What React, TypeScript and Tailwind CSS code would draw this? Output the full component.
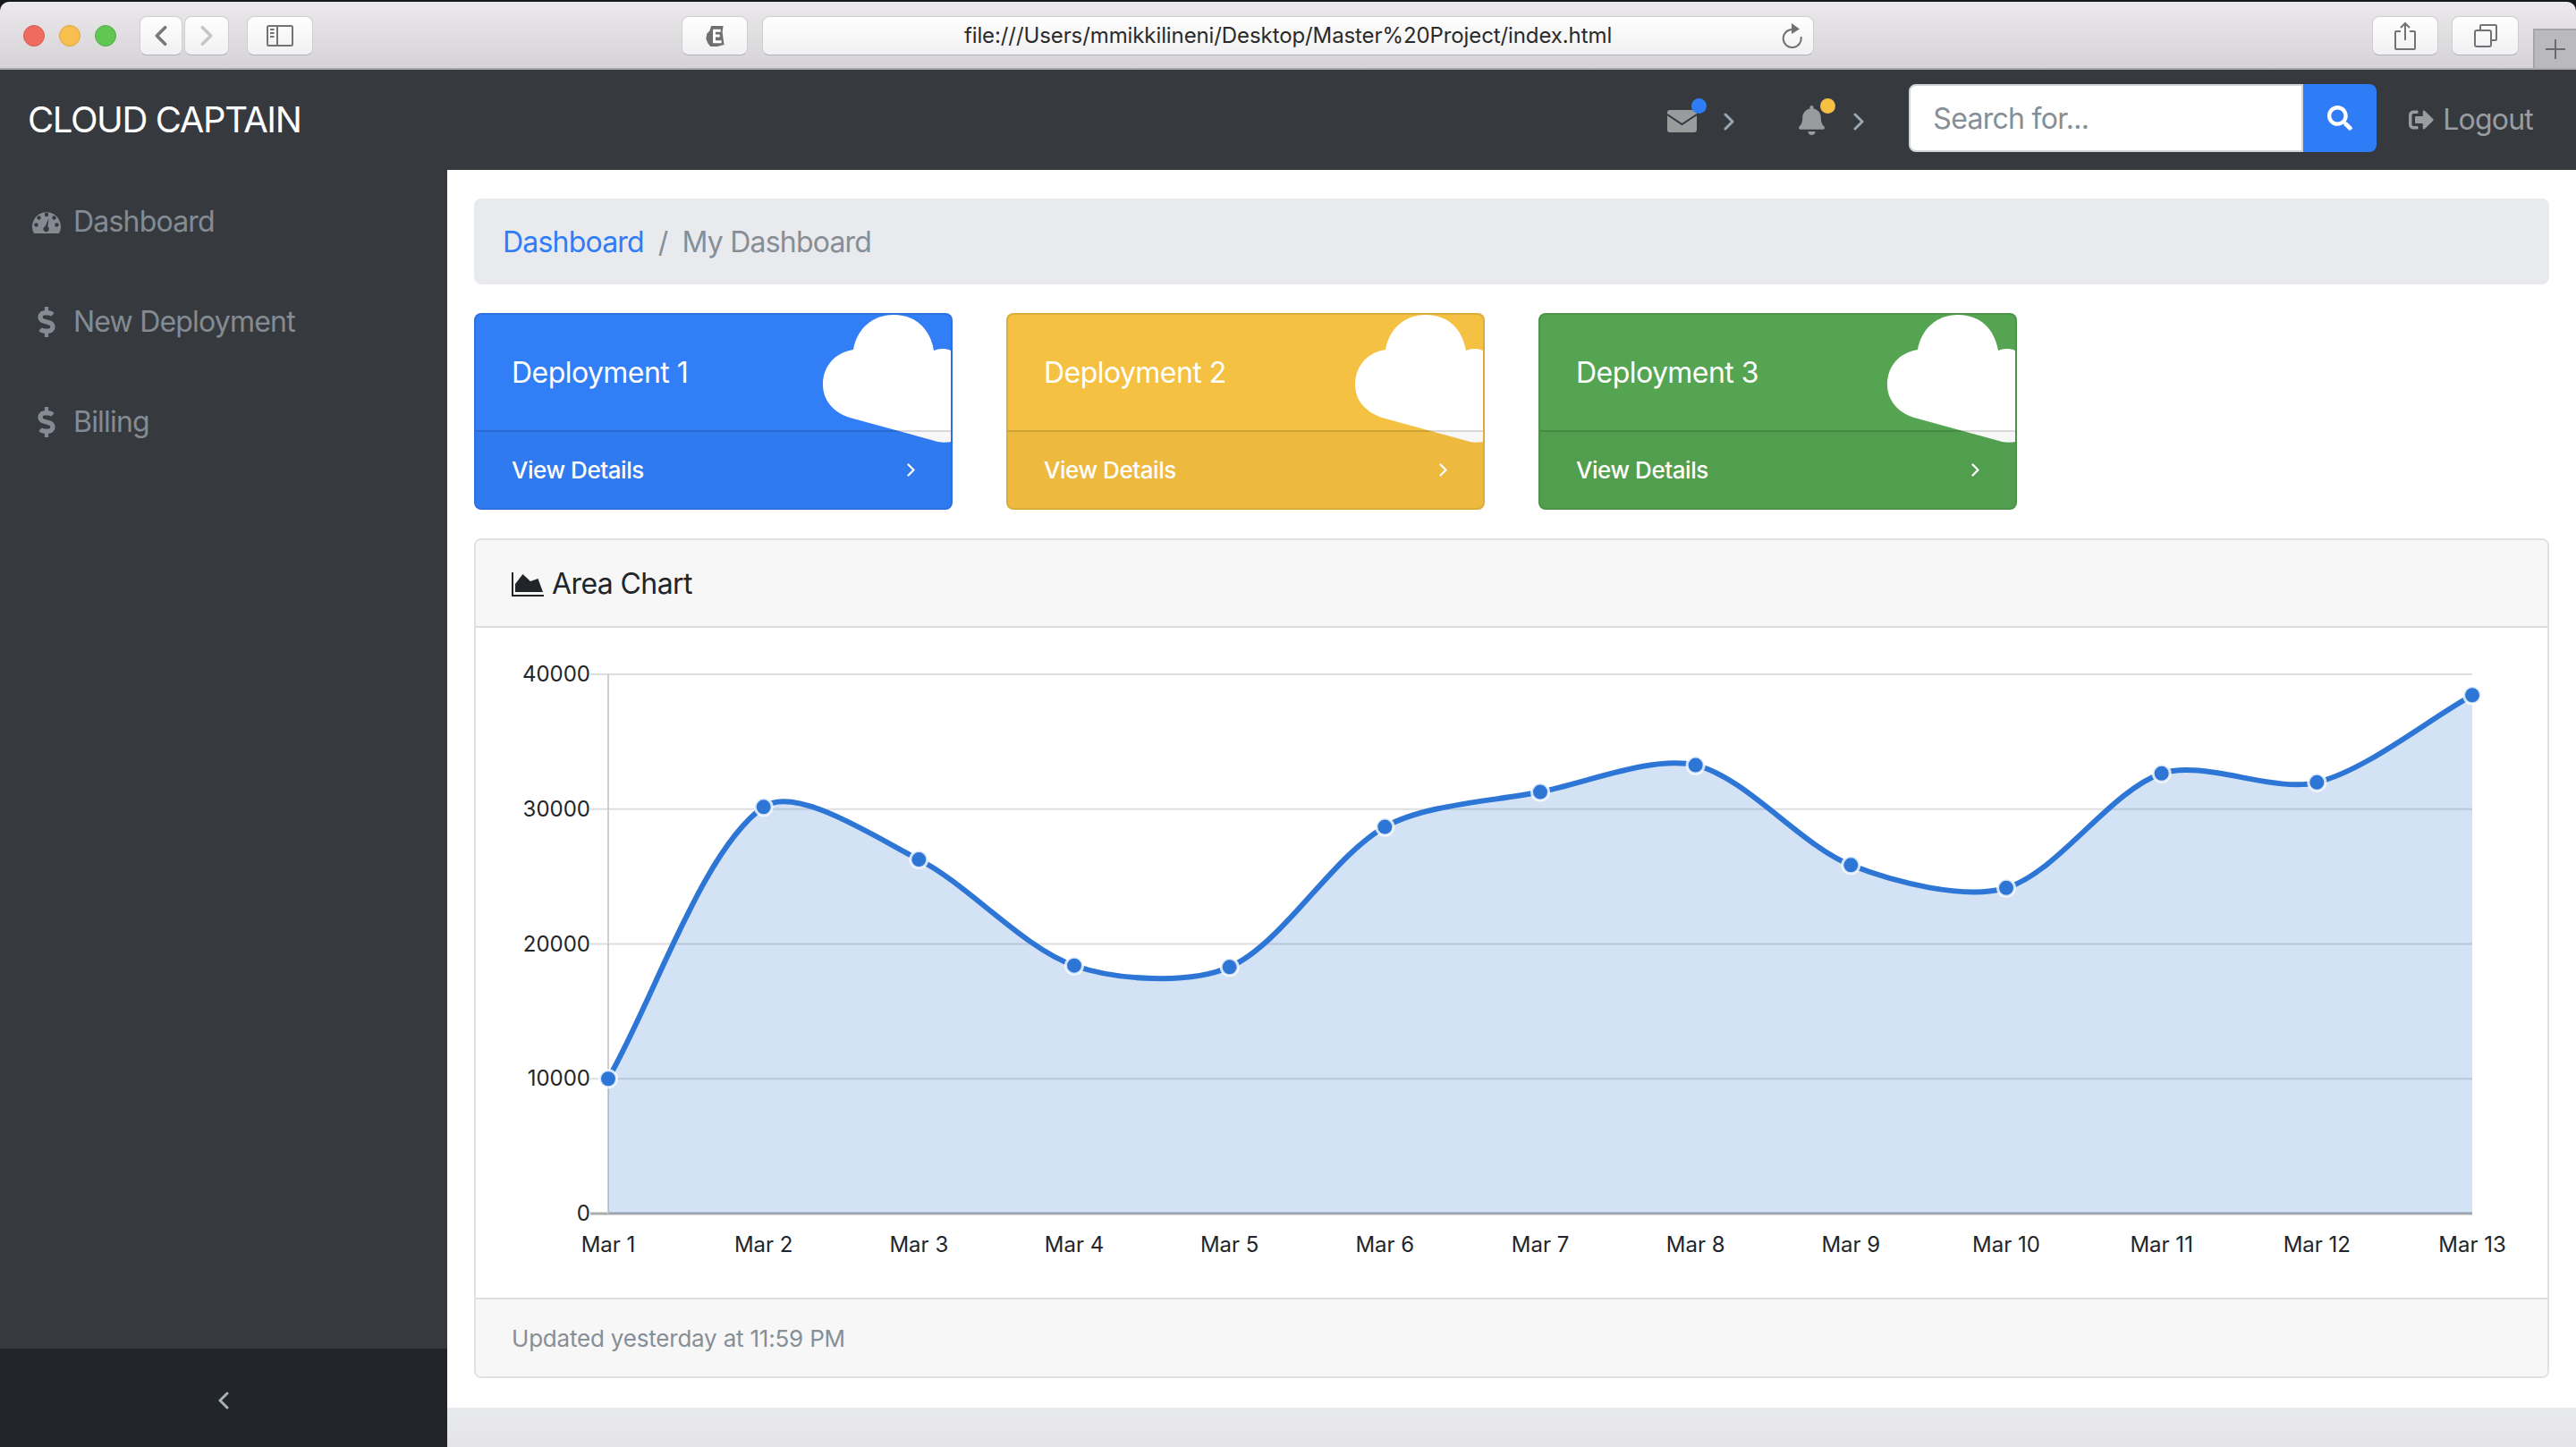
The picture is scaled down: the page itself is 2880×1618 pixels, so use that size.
import { FaBell, FaDollarSign, FaSearch, FaSignOutAlt } from "react-icons/fa";

const labels = ["Mar 1", "Mar 2", "Mar 3", "Mar 4", "Mar 5", "Mar 6", "Mar 7", "Mar 8", "Mar 9", "Mar 10", "Mar 11", "Mar 12", "Mar 13"];
const values = [10000, 30162, 26263, 18394, 18287, 28682, 31274, 33259, 25849, 24159, 32651, 31984, 38451];

const chartLeft = 680;
const chartRight = 2764;
const chartTop = 755;
const chartBottom = 1358;

const points = values.map((v, i) => ({
  x: chartLeft + (i * (chartRight - chartLeft)) / 12,
  y: chartBottom - (v / 40000) * (chartBottom - chartTop),
}));

// same spline as chart.js, tension 0.3
const linePath = () => {
  const tension = 0.3;
  const ctrl = points.map((p, i) => {
    const prev = points[i - 1] ?? p;
    const next = points[i + 1] ?? p;
    const d01 = Math.hypot(p.x - prev.x, p.y - prev.y);
    const d12 = Math.hypot(next.x - p.x, next.y - p.y);
    const total = d01 + d12 || 1;
    const dx = next.x - prev.x;
    const dy = next.y - prev.y;
    return {
      before: { x: p.x - (tension * d01 * dx) / total, y: p.y - (tension * d01 * dy) / total },
      after: { x: p.x + (tension * d12 * dx) / total, y: p.y + (tension * d12 * dy) / total },
    };
  });
  let d = `M${points[0].x} ${points[0].y}`;
  for (let i = 1; i < points.length; i++) {
    const a = ctrl[i - 1].after;
    const b = ctrl[i].before;
    d += ` C${a.x} ${a.y} ${b.x} ${b.y} ${points[i].x} ${points[i].y}`;
  }
  return d;
};

const Chevron = ({ dir, className }: { dir: "left" | "right"; className: string }) => (
  <svg viewBox="0 0 12 20" className={className} fill="none" stroke="currentColor" strokeWidth="3" strokeLinecap="round" strokeLinejoin="round">
    <polyline points={dir === "left" ? "10,2 2,10 10,18" : "2,2 10,10 2,18"} />
  </svg>
);

const ToolButton = ({ className, children }: { className: string; children?: React.ReactNode }) => (
  <div className={`h-[44px] rounded-[8px] bg-gradient-to-b from-white to-[#f1f0f2] border border-[#cfcdd0] border-b-[#b5b3b6] flex items-center justify-center ${className}`}>
    {children}
  </div>
);

const BrowserBar = () => (
  <div className="h-[78px] shrink-0 bg-[#15181c]">
    <div className="h-[76px] mt-[2px] rounded-t-[10px] bg-gradient-to-b from-[#ebe9ec] to-[#d5d3d6] border-b-2 border-[#a9a7aa] flex items-start pt-[16px]">
      <div className="ml-[26px] mt-[10px] flex gap-[16px]">
        <div className="w-[24px] h-[24px] rounded-full bg-[#ee6b60] border border-[#d9584e]" />
        <div className="w-[24px] h-[24px] rounded-full bg-[#f6bf4f] border border-[#dfa43a]" />
        <div className="w-[24px] h-[24px] rounded-full bg-[#62c655] border border-[#50ac44]" />
      </div>
      <ToolButton className="ml-[26px] w-[48px]">
        <Chevron dir="left" className="w-[14px] h-[24px] text-[#777779]" />
      </ToolButton>
      <ToolButton className="ml-[2px] w-[50px]">
        <Chevron dir="right" className="w-[14px] h-[24px] text-[#c6c5c7]" />
      </ToolButton>
      <ToolButton className="ml-[20px] w-[74px]">
        <svg viewBox="0 0 30 24" className="w-[30px] h-[24px]" fill="none" stroke="#737375" strokeWidth="2">
          <rect x="1" y="1" width="28" height="22" rx="1.5" />
          <line x1="12" y1="1" x2="12" y2="23" />
          <line x1="4" y1="5" x2="8.5" y2="5" />
          <line x1="4" y1="9" x2="8.5" y2="9" />
          <line x1="4" y1="13" x2="8.5" y2="13" />
        </svg>
      </ToolButton>
      <ToolButton className="ml-[412px] w-[74px]">
        <svg viewBox="0 0 22 26" className="w-[22px] h-[25px]">
          <path d="M7 1 L21 1 L20 8 L21 16 L22 23 L14 25 L6 25 L3 21 L1 16 L2 10 L5 7 Z" fill="#6f6f71" />
          <path d="M9 5 L18 5 L18 8 L12 8 L12 11 L17 11 L17 14 L12 14 L12 18 L19 18 L19 21 L9 21 Z" fill="#fff" />
        </svg>
      </ToolButton>
      <ToolButton className="ml-[16px] w-[1176px] relative">
        <span className="text-[24px] leading-none text-[#2a2a2b] tracking-[-0.1px]">file:///Users/mmikkilineni/Desktop/Master%20Project/index.html</span>
        <svg viewBox="0 0 24 28" className="absolute right-[11px] top-[7px] w-[24px] h-[28px]" fill="none">
          <path d="M12 7 A10 10 0 1 0 21.5 15" stroke="#717173" strokeWidth="2" />
          <polygon points="11,0 20,6.5 11,12" fill="#717173" />
        </svg>
      </ToolButton>
      <ToolButton className="ml-[624px] w-[74px]">
        <svg viewBox="0 0 24 32" className="w-[24px] h-[32px]" fill="none" stroke="#737375" strokeWidth="2">
          <path d="M7 11 H2 a1 1 0 0 0 -1 1 V30 a1 1 0 0 0 1 1 H22 a1 1 0 0 0 1 -1 V12 a1 1 0 0 0 -1 -1 H17" />
          <line x1="12" y1="2" x2="12" y2="21" />
          <polyline points="7,7 12,2 17,7" />
        </svg>
      </ToolButton>
      <ToolButton className="ml-[15px] w-[75px]">
        <svg viewBox="0 0 26 26" className="w-[26px] h-[26px]" fill="none" stroke="#737375" strokeWidth="2">
          <rect x="1" y="7" width="18" height="18" rx="2" />
          <path d="M7 7 V2 a1 1 0 0 1 1 -1 H24 a1 1 0 0 1 1 1 V17 a1 1 0 0 1 -1 1 H19" />
        </svg>
      </ToolButton>
      <div className="ml-[16px] flex-1 self-end h-[44px] bg-[#bab9bb] border-l-2 border-t-2 border-[#a6a4a7] flex items-center justify-center">
        <svg viewBox="0 0 24 24" className="w-[24px] h-[24px]" stroke="#6b6b6d" strokeWidth="2">
          <line x1="1" y1="12" x2="23" y2="12" />
          <line x1="12" y1="1" x2="12" y2="23" />
        </svg>
      </div>
    </div>
  </div>
);

const TopNav = () => (
  <div className="h-[112px] shrink-0 bg-[#363a3f] flex items-center">
    <div className="ml-[31px] text-[40px] leading-none text-white tracking-[-1.4px]">CLOUD CAPTAIN</div>
    <div className="ml-auto flex items-center">
      <div className="relative w-[33px] h-[25px] mt-[3px]">
        <svg viewBox="0 0 33 25" className="w-[33px] h-[25px]">
          <rect width="33" height="25" rx="3" fill="#9a9b9d" />
          <polyline points="0,5 16.5,16 33,5" fill="none" stroke="#363a3f" strokeWidth="2" />
        </svg>
        <div className="absolute left-[27px] top-[-13px] w-[17px] h-[17px] rounded-full bg-[#2f7df6]" />
      </div>
      <Chevron dir="right" className="ml-[30px] mt-[3px] w-[12px] h-[20px] text-[#9ba7b3]" />
      <div className="relative ml-[71px] mt-[1px] w-[31px] h-[33px]">
        <FaBell className="w-[31px] h-[33px] text-[#9a9b9d]" />
        <div className="absolute left-[25px] top-[-8px] w-[17px] h-[17px] rounded-full bg-[#f6c142]" />
      </div>
      <Chevron dir="right" className="ml-[31px] mt-[3px] w-[12px] h-[20px] text-[#9ba7b3]" />
      <div className="ml-[50px] mb-[4px] flex h-[76px]">
        <input
          readOnly
          placeholder="Search for..."
          className="w-[441px] h-[76px] rounded-l-[8px] bg-white border-2 border-[#ced4da] pl-[25px] text-[32px] tracking-[-0.7px] placeholder:text-[#868e96] outline-none"
        />
        <div className="w-[82px] h-[76px] rounded-r-[8px] bg-[#2f7df6] flex items-center justify-center">
          <FaSearch className="w-[28px] h-[28px] text-white" />
        </div>
      </div>
      <div className="ml-[36px] mr-[48px] flex items-center text-[#9a9da0]">
        <FaSignOutAlt className="w-[28px] h-[28px]" />
        <span className="ml-[10px] text-[32px] leading-none tracking-[-0.8px]">Logout</span>
      </div>
    </div>
  </div>
);

const NavItem = ({ label, icon }: { label: string; icon: React.ReactNode }) => (
  <div className="h-[112px] flex items-center text-[#848b93]">
    <div className="w-[82px] pl-[36px] shrink-0">{icon}</div>
    <span className="text-[32px] leading-none tracking-[-0.8px]">{label}</span>
  </div>
);

const Sidebar = () => (
  <div className="w-[500px] shrink-0 bg-[#363a3f] flex flex-col">
    <div className="flex-1 pt-[2px]">
      <NavItem
        label="Dashboard"
        icon={
          <svg viewBox="0 0 32 26" className="w-[32px] h-[26px]">
            <path d="M2 26 A16 16 0 1 1 30 26 Z" fill="#848b93" />
            <circle cx="16" cy="5" r="2.2" fill="#363a3f" />
            <circle cx="7.5" cy="8.5" r="2.2" fill="#363a3f" />
            <circle cx="24.5" cy="8.5" r="2.2" fill="#363a3f" />
            <circle cx="4.5" cy="16.5" r="2.2" fill="#363a3f" />
            <circle cx="27.5" cy="16.5" r="2.2" fill="#363a3f" />
            <path d="M18.5 9 L17.4 18.4 A3.2 3.2 0 1 1 14.6 18 Z" fill="#363a3f" />
          </svg>
        }
      />
      <NavItem label="New Deployment" icon={<FaDollarSign className="ml-[6px] w-[20px] h-[34px]" />} />
      <NavItem label="Billing" icon={<FaDollarSign className="ml-[6px] w-[20px] h-[34px]" />} />
    </div>
    <div className="h-[110px] bg-[#22252a] flex items-center justify-center">
      <Chevron dir="left" className="w-[12px] h-[20px] mt-[6px] text-[#a9b1b9]" />
    </div>
  </div>
);

const DeployCard = ({ title, bg }: { title: string; bg: string }) => (
  <div className={`relative w-[535px] h-[220px] rounded-[8px] border-2 border-black/[0.1] overflow-hidden text-white ${bg}`}>
    <svg viewBox="903 352 160 150" className="absolute right-0 top-0 w-[160px] h-[150px]">
      <path
        d="M954 391 C958 368 975 352 999 352 C1024 352 1040 368 1044 392 C1049 390 1056 389 1063 392 L1063 494 C1058 495 1050 495 1045 493 L950 467 C932 461 920 448 920 430 C920 409 934 394 954 391 Z"
        fill="#fff"
      />
    </svg>
    <div className="relative h-[129px] flex items-center pl-[40px] text-[32px] leading-none tracking-[-0.55px]">{title}</div>
    <div className="relative h-[87px] bg-black/[0.03] border-t-2 border-black/[0.125] flex items-center pl-[40px] pr-[40px] justify-between">
      <span className="text-[26px] leading-none font-medium tracking-[-0.45px]">View Details</span>
      <Chevron dir="right" className="w-[9px] h-[15px]" />
    </div>
  </div>
);

const AreaChart = () => (
  <svg viewBox="532 703 2316 749" className="w-[2316px] h-[749px] block">
    {[40000, 30000, 20000, 10000, 0].map((tick) => {
      const y = chartBottom - (tick / 40000) * (chartBottom - chartTop);
      return (
        <g key={tick}>
          <line x1="660" x2={chartRight} y1={y} y2={y} stroke={tick === 0 ? "#acacac" : "#dedede"} strokeWidth={tick === 0 ? 3 : 2} />
          <text x="660" y={y + 8} textAnchor="end" fontSize="24" fill="#222529">
            {tick}
          </text>
        </g>
      );
    })}
    <line x1={chartLeft} x2={chartLeft} y1={chartTop} y2={chartBottom} stroke="#cfcfcf" strokeWidth="2" />
    <path d={`${linePath()} L${chartRight} ${chartBottom} L${chartLeft} ${chartBottom} Z`} fill="rgba(40,110,210,0.2)" />
    <path d={linePath()} fill="none" stroke="#2e76d6" strokeWidth="6" />
    {points.map((p, i) => (
      <circle key={i} cx={p.x} cy={p.y} r="9.5" fill="#2e76d6" stroke="rgba(255,255,255,0.8)" strokeWidth="3" />
    ))}
    {labels.map((label, i) => (
      <text key={label} x={points[i].x} y="1401" textAnchor="middle" fontSize="24" fill="#222529">
        {label}
      </text>
    ))}
  </svg>
);

export default function App() {
  return (
    <div className="w-[2880px] h-[1618px] overflow-hidden flex flex-col font-['Inter','Noto_Sans',sans-serif] bg-white">
      <BrowserBar />
      <TopNav />
      <div className="flex flex-1 min-h-0">
        <Sidebar />
        <div className="flex-1 flex flex-col min-w-0">
          <div className="h-[1384px] bg-white px-[30px] pt-[32px]">
            <div className="h-[96px] rounded-[8px] bg-[#e9eaee] flex items-center pl-[32px] pt-[2px] text-[32px] leading-none tracking-[-0.8px]">
              <span className="text-[#2f7df6]">Dashboard</span>
              <span className="mx-[16px] text-[#868e96]">/</span>
              <span className="text-[#868e96]">My Dashboard</span>
            </div>
            <div className="mt-[32px] flex gap-[60px]">
              <DeployCard title="Deployment 1" bg="bg-[#317ef6]" />
              <DeployCard title="Deployment 2" bg="bg-[#f5c142]" />
              <DeployCard title="Deployment 3" bg="bg-[#55a452]" />
            </div>
            <div className="mt-[32px] h-[939px] w-[2320px] rounded-[8px] border-2 border-[#e0e0e0] overflow-hidden flex flex-col">
              <div className="h-[98px] shrink-0 bg-[#f7f7f7] border-b-2 border-[#dedede] flex items-center pl-[40px] pt-[2px] text-[#212529]">
                <svg viewBox="0 0 36 27" className="w-[36px] h-[27px]" fill="currentColor">
                  <path d="M0 0 H2 V25 H36 V27 H0 Z" />
                  <path d="M4 22 V13 L12.5 2 L21 10 L29.5 7 L35 22 Z" />
                </svg>
                <span className="ml-[9px] text-[32px] leading-none tracking-[-0.6px]">Area Chart</span>
              </div>
              <AreaChart />
              <div className="flex-1 bg-[#f7f7f7] border-t-2 border-[#dedede] flex items-center pl-[40px] pt-[2px] text-[26px] leading-none tracking-[-0.2px] text-[#868e96]">
                Updated yesterday at 11:59 PM
              </div>
            </div>
          </div>
          <div className="flex-1 bg-gradient-to-b from-[#e9eaee] to-[#e4e4e8]" />
        </div>
      </div>
    </div>
  );
}
